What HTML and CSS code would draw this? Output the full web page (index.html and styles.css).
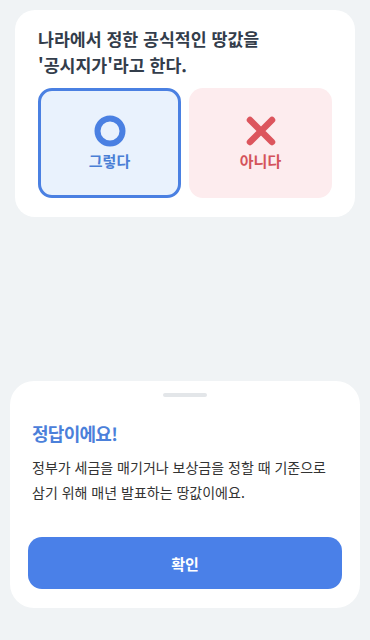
FILE: index.html
```html
<!DOCTYPE html>
<html lang="ko">
<head>
<meta charset="utf-8">
<meta name="viewport" content="width=device-width, initial-scale=1">
<link rel="stylesheet" href="styles.css">
</head>
<body>
<div class="page">
  <section class="quiz-card">
    <h1 class="question">나라에서 정한 공식적인 땅값을<br>'공시지가'라고 한다.</h1>
    <div class="options">
      <button class="option option-yes">
        <svg class="icon" width="32" height="32" viewBox="0 0 32 32"><circle cx="16" cy="16" r="12.5" fill="none" stroke="#4a80e2" stroke-width="6"/></svg>
        <span class="option-label">그렇다</span>
      </button>
      <button class="option option-no">
        <svg class="icon" width="32" height="32" viewBox="0 0 32 32"><path d="M5 5 L27 27 M27 5 L5 27" stroke="#dc555d" stroke-width="6.5" stroke-linecap="round" fill="none"/></svg>
        <span class="option-label">아니다</span>
      </button>
    </div>
  </section>

  <section class="sheet">
    <div class="handle"></div>
    <h2 class="result-title">정답이에요!</h2>
    <p class="result-text">정부가 세금을 매기거나 보상금을 정할 때 기준으로<br>삼기 위해 매년 발표하는 땅값이에요.</p>
    <button class="confirm">확인</button>
  </section>
</div>
</body>
</html>
```
FILE: styles.css
```css
* { box-sizing: border-box; }
html, body { margin: 0; padding: 0; }
body {
  background: #f0f3f5;
  font-family: "Noto Sans CJK KR", "Noto Sans", sans-serif;
  color: #333d4b;
}
.page {
  min-height: 640px;
  display: flex;
  flex-direction: column;
  padding: 10px 0 32px;
}
.quiz-card {
  margin: 0 15px;
  background: #fff;
  border-radius: 20px;
  padding: 16px 23px 19px;
}
.question {
  margin: 0;
  font-size: 17.3px;
  line-height: 26px;
  font-weight: 700;
  color: #333d4b;
}
.options {
  margin-top: 10px;
  display: grid;
  grid-template-columns: 1fr 1fr;
  gap: 8px;
}
.option {
  height: 110px;
  border-radius: 14px;
  border: 3px solid transparent;
  display: flex;
  flex-direction: column;
  align-items: center;
  justify-content: center;
  gap: 4px;
  font-family: inherit;
  padding: 0;
}
.option-yes { background: #e9f2fd; border-color: #4a80e2; color: #4a7fd6; }
.option-no { background: #fdecee; color: #d4535b; }
.option-label {
  font-size: 15px;
  font-weight: 700;
  line-height: 20px;
}
.icon { display: block; }
.sheet {
  margin: auto 10px 0;
  background: #fff;
  border-radius: 24px;
  padding: 12px 18px 19px;
  display: flex;
  flex-direction: column;
}
.handle {
  align-self: center;
  width: 44px;
  height: 4px;
  border-radius: 2px;
  background: #e3e6e9;
}
.result-title {
  margin: 23px 4px 0;
  font-size: 18px;
  line-height: 26px;
  font-weight: 700;
  color: #4b80da;
  letter-spacing: -0.04em;
}
.result-text {
  margin: 9px 4px 0;
  font-size: 14px;
  line-height: 25px;
  font-weight: 400;
  color: #333;
}
.confirm {
  margin-top: 32px;
  height: 52px;
  border: none;
  border-radius: 14px;
  background: #4a80e8;
  color: #fff;
  font-family: inherit;
  font-size: 15px;
  font-weight: 700;
}
```
